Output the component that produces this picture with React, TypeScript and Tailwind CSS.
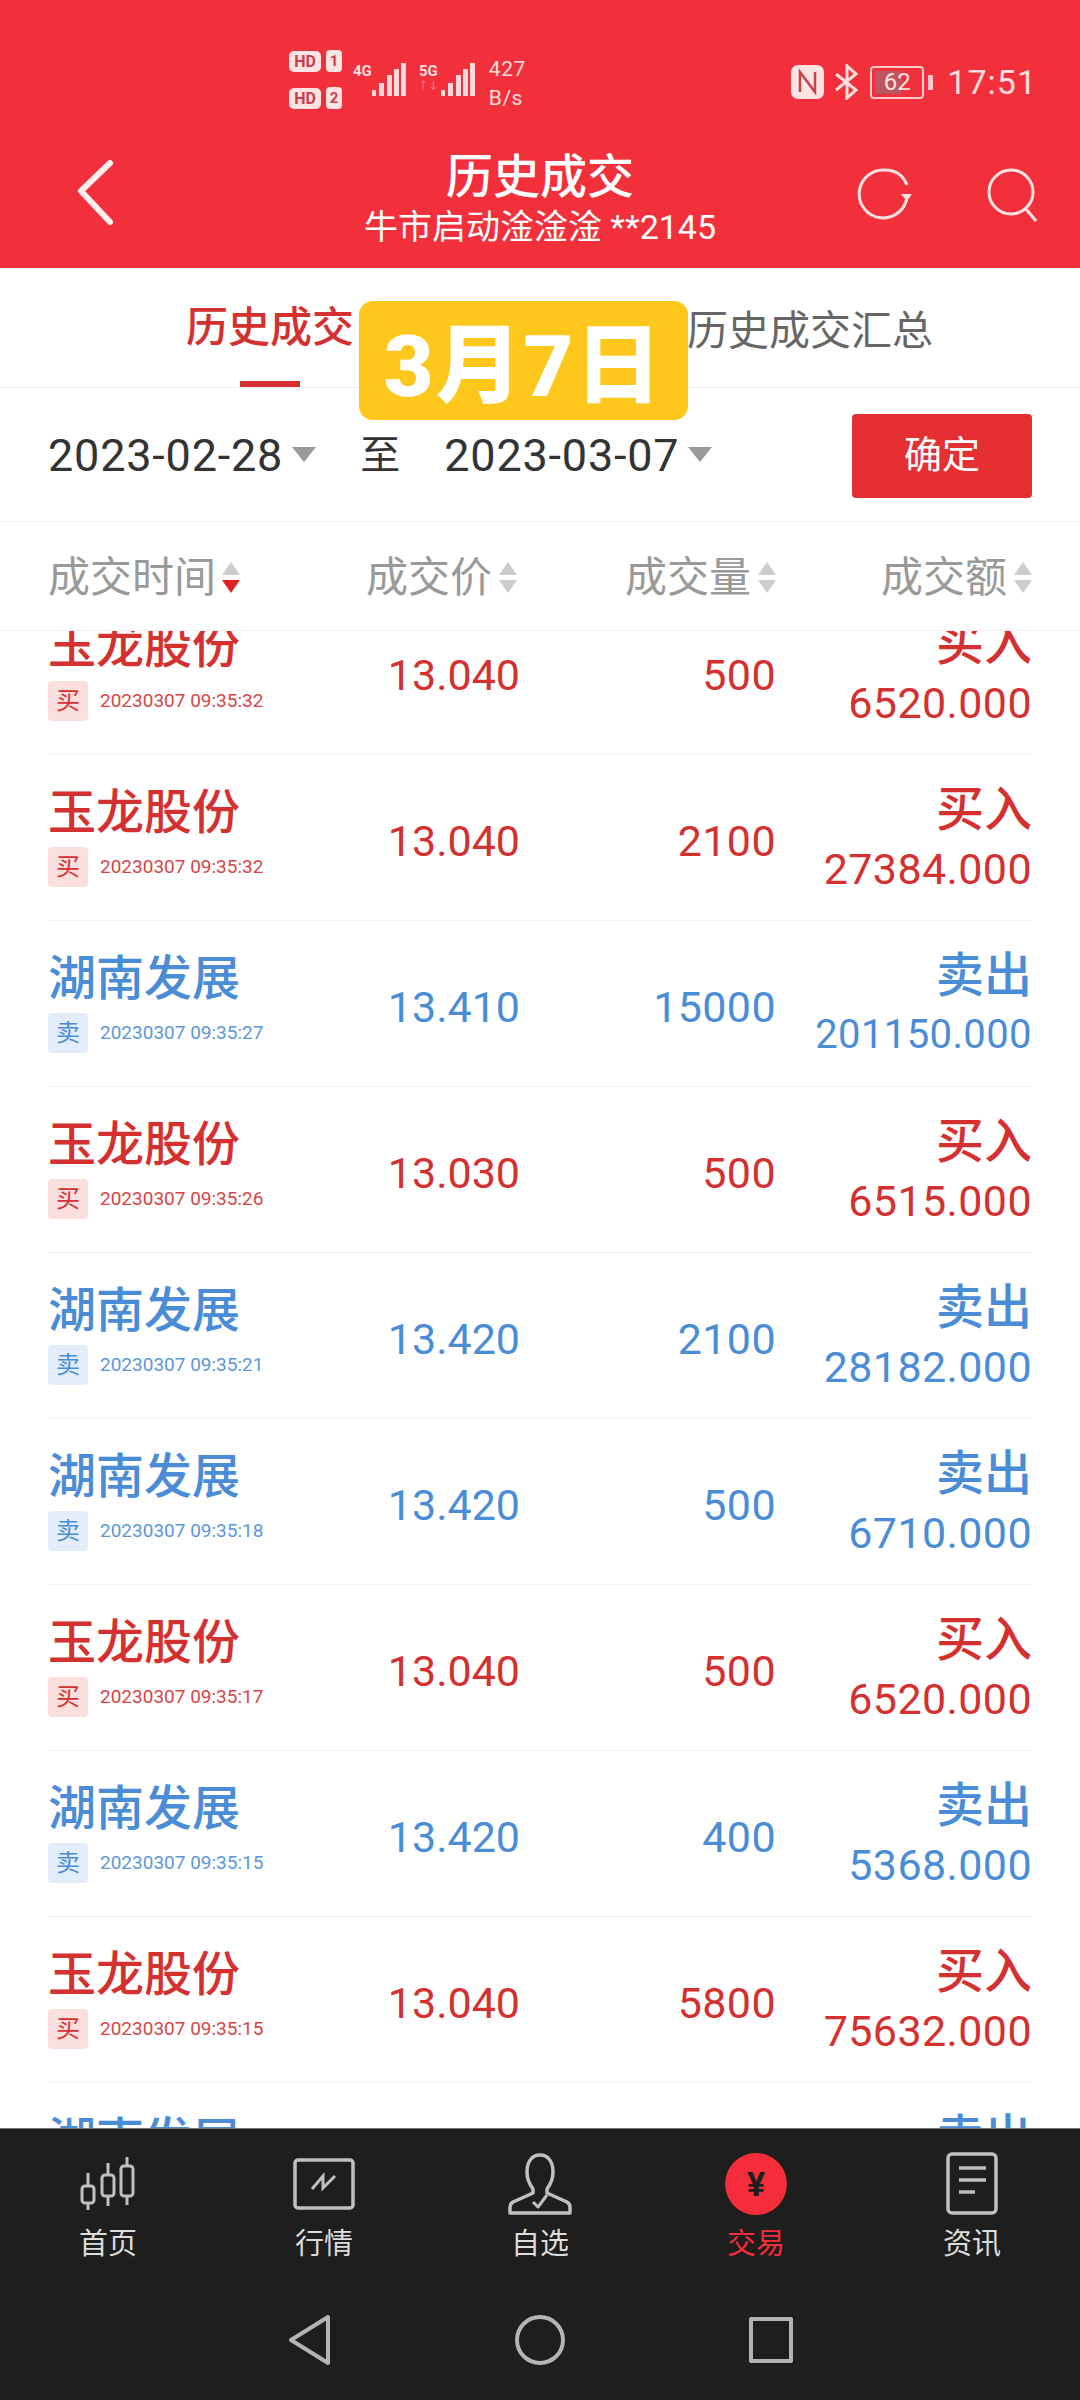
type Trade = { name: string; side: 'buy' | 'sell'; time: string; price: string; qty: string; amount: string };

const trades: Trade[] = [
    { name: '玉龙股份', side: 'buy', time: '20230307 09:35:32', price: '13.040', qty: '500', amount: '6520.000' },
    { name: '玉龙股份', side: 'buy', time: '20230307 09:35:32', price: '13.040', qty: '2100', amount: '27384.000' },
    { name: '湖南发展', side: 'sell', time: '20230307 09:35:27', price: '13.410', qty: '15000', amount: '201150.000' },
    { name: '玉龙股份', side: 'buy', time: '20230307 09:35:26', price: '13.030', qty: '500', amount: '6515.000' },
    { name: '湖南发展', side: 'sell', time: '20230307 09:35:21', price: '13.420', qty: '2100', amount: '28182.000' },
    { name: '湖南发展', side: 'sell', time: '20230307 09:35:18', price: '13.420', qty: '500', amount: '6710.000' },
    { name: '玉龙股份', side: 'buy', time: '20230307 09:35:17', price: '13.040', qty: '500', amount: '6520.000' },
    { name: '湖南发展', side: 'sell', time: '20230307 09:35:15', price: '13.420', qty: '400', amount: '5368.000' },
    { name: '玉龙股份', side: 'buy', time: '20230307 09:35:15', price: '13.040', qty: '5800', amount: '75632.000' },
    { name: '湖南发展', side: 'sell', time: '20230307 09:35:12', price: '13.420', qty: '300', amount: '4026.000' },
];

function Signal() {
    return (
        <svg width="34" height="34" viewBox="0 0 34 34" fill="#ffd9d9">
            <rect x="0" y="27" width="4" height="6" />
            <rect x="7" y="20" width="5" height="13" />
            <rect x="15" y="12" width="5" height="21" />
            <rect x="22" y="6" width="5" height="27" />
            <rect x="29" y="0" width="5" height="33" />
        </svg>
    );
}

function SimTag({ n }: { n: string }) {
    return (
        <div className="flex items-center gap-[5px]">
            <span className="w-[32px] h-[21px] rounded-[5px] bg-[#ffe3e3] text-[#c8404a] text-[16px] font-bold leading-[21px] text-center">HD</span>
            <span className="w-[16px] h-[22px] rounded-[4px] bg-[#ffe3e3] text-[#c8404a] text-[15px] font-bold leading-[22px] text-center">{n}</span>
        </div>
    );
}

function StatusBar() {
    return (
        <div className="h-[108px] pl-[289px] pr-[43px] pt-[50px] flex items-start justify-between text-[#ffdede]">
            <div className="flex items-start">
                <div className="flex flex-col gap-[15px]">
                    <SimTag n="1" />
                    <SimTag n="2" />
                </div>
                <span className="ml-[11px] mt-[12px] text-[15px] font-bold leading-[18px]">4G</span>
                <div className="mt-[13px]"><Signal /></div>
                <div className="ml-[13px] mt-[12px] flex flex-col items-center w-[19px]">
                    <span className="text-[15px] font-bold leading-[18px]">5G</span>
                    <span className="text-[10px] leading-[12px] text-[#f78b8f]">↑↓</span>
                </div>
                <div className="ml-[3px] mt-[13px]"><Signal /></div>
                <div className="ml-[14px] mt-[5px] flex flex-col text-[21px] leading-[29px] tracking-[0.5px]">
                    <span>427</span>
                    <span>B/s</span>
                </div>
            </div>
            <div className="flex items-center mt-[12px]">
                <svg width="33" height="34" viewBox="0 0 33 34">
                    <rect width="33" height="34" rx="7" fill="#ffe3e3" />
                    <path d="M9 27V7L24 27V7" fill="none" stroke="#c8404a" strokeWidth="2.5" />
                </svg>
                <svg className="ml-[10px]" width="26" height="36" viewBox="0 0 26 36" fill="none" stroke="#ffdede" strokeWidth="3">
                    <path d="M2 10L22 26L13 34V2L22 10L2 26" />
                </svg>
                <div className="ml-[10px] w-[54px] h-[33px] rounded-[4px] border-2 border-[#ffc9c9] p-[3px] relative">
                    <div className="h-full w-[60%] bg-[#bd5560]" />
                    <span className="absolute inset-0 text-center text-[24px] leading-[29px] text-[#ffe3e3]">62</span>
                </div>
                <div className="ml-[4px] w-[5px] h-[15px] bg-[#ffc9c9] rounded-[1px]" />
                <span className="ml-[14px] text-[34px] leading-[40px] tracking-[1px]">17:51</span>
            </div>
        </div>
    );
}

function TitleBar() {
    return (
        <div className="h-[160px] grid grid-cols-[1fr_auto_1fr] items-start text-white">
            <div className="pl-[74px] pt-[50px]">
                <svg width="44" height="70" viewBox="0 0 44 70" fill="none" stroke="#ffeeee" strokeWidth="6" strokeLinecap="round" strokeLinejoin="round">
                    <path d="M36 5L7 33L36 64" />
                </svg>
            </div>
            <div className="flex flex-col items-center">
                <span className="text-[47px] leading-[56px] mt-[41px] font-medium">历史成交</span>
                <span className="text-[34px] leading-[40px] mt-[2px] whitespace-nowrap">
                    牛市启动淦淦淦 **2145
                </span>
            </div>
            <div className="flex justify-end items-start pr-[40px] pt-[59px] gap-[73px]">
                <svg width="56" height="54" viewBox="0 0 56 54" fill="none" stroke="#ffe3e3" strokeWidth="3">
                    <path d="M50 30A24 24 0 1 1 28 3C38 3 46 8 50 18" />
                    <path d="M44 27H55L50 34Z" fill="#ffe3e3" stroke="none" />
                </svg>
                <svg width="54" height="56" viewBox="0 0 54 56" fill="none" stroke="#ffe3e3" strokeWidth="3">
                    <circle cx="25" cy="25" r="22" />
                    <path d="M40 42L50 54" />
                </svg>
            </div>
        </div>
    );
}

function Tabs() {
    return (
        <div className="relative h-[120px] border-b border-[#f0f0f0] grid grid-cols-2">
            <div className="flex flex-col items-center">
                <span className="mt-[33px] text-[42px] leading-[54px] text-[#d43030] font-medium">历史成交</span>
                <div className="mt-[26px] w-[60px] h-[6px] bg-[#d43030]" />
            </div>
            <div className="flex justify-center">
                <span className="mt-[36px] text-[41px] leading-[54px] text-[#666]">历史成交汇总</span>
            </div>
            <div className="absolute left-[359px] top-[33px] w-[329px] h-[119px] rounded-[14px] bg-[#fdc71b] text-white font-black text-[86px] leading-[132px] text-center z-10 tracking-[2px] overflow-hidden">
                3月7日
            </div>
        </div>
    );
}

function DateCaret() {
    return <div className="w-0 h-0 border-x-[12px] border-x-transparent border-t-[15px] border-t-[#999]" />;
}

function DateRow() {
    return (
        <div className="h-[134px] pl-[48px] pr-[48px] flex items-center border-b border-[#f0f0f0] text-[#333]">
            <span className="text-[45px] leading-[50px] tracking-[0.8px] mt-[2px]">2023-02-28</span>
            <div className="ml-[9px] mt-[-1px]"><DateCaret /></div>
            <span className="ml-[44px] text-[40px] leading-[50px] mt-[2px]">至</span>
            <span className="ml-[44px] text-[45px] leading-[50px] tracking-[0.8px] mt-[2px]">2023-03-07</span>
            <div className="ml-[9px] mt-[-1px]"><DateCaret /></div>
            <button className="ml-auto w-[180px] h-[84px] rounded-[4px] bg-[#e62f33] text-white text-[38px] mt-[2px]">确定</button>
        </div>
    );
}

function SortIcon({ active }: { active?: boolean }) {
    return (
        <div className="flex flex-col gap-[5px]">
            <div className="w-0 h-0 border-x-[9px] border-x-transparent border-b-[13px] border-b-[#ccc]" />
            <div className={active ? 'w-0 h-0 border-x-[9px] border-x-transparent border-t-[13px] border-t-[#e02020]' : 'w-0 h-0 border-x-[9px] border-x-transparent border-t-[13px] border-t-[#ccc]'} />
        </div>
    );
}

function TableHeader() {
    const cell = 'flex items-center justify-end gap-[7px] whitespace-nowrap';
    return (
        <div className="h-[108px] px-[48px] pt-[3px] grid grid-cols-[344px_128px_256px_256px] items-center text-[42px] leading-[50px] text-[#999]">
            <div className="flex items-center gap-[6px]">成交时间<SortIcon active /></div>
            <div className={cell + ' pr-[3px]'}>成交价<SortIcon /></div>
            <div className={cell}>成交量<SortIcon /></div>
            <div className={cell}>成交额<SortIcon /></div>
        </div>
    );
}

function TradeRow({ trade }: { trade: Trade }) {
    const buy = trade.side === 'buy';
    return (
        <div className={buy
            ? 'h-[166px] border-b border-[#f0f0f0] grid grid-cols-[336px_136px_256px_256px] text-[#d43030]'
            : 'h-[166px] border-b border-[#f0f0f0] grid grid-cols-[336px_136px_256px_256px] text-[#4a8cd6]'}>
            <div className="pt-[32px]">
                <div className="text-[48px] leading-[52px] font-medium">{trade.name}</div>
                <div className="mt-[8px] flex items-center">
                    <span className={buy
                        ? 'w-[40px] h-[40px] rounded-[4px] bg-[#fbdfdf] text-[24px] leading-[40px] text-center'
                        : 'w-[40px] h-[40px] rounded-[4px] bg-[#e3edf9] text-[24px] leading-[40px] text-center'}>
                        {buy ? '买' : '卖'}
                    </span>
                    <span className="ml-[12px] text-[19px] leading-[40px] whitespace-nowrap opacity-90">{trade.time}</span>
                </div>
            </div>
            <div className="pt-[60px] text-[43px] leading-[52px] text-right font-[450] whitespace-nowrap">{trade.price}</div>
            <div className="pt-[60px] text-[43px] leading-[52px] text-right font-[450] tracking-[0.4px]">{trade.qty}</div>
            <div className="pt-[29px] text-right">
                <div className="text-[48px] leading-[52px] font-medium">{buy ? '买入' : '卖出'}</div>
                {/* long amounts are shrunk to fit */}
                <div className={trade.amount.length > 9
                    ? 'mt-[7px] text-[40px] leading-[52px] font-[450] tracking-[0.4px]'
                    : 'mt-[7px] text-[43px] leading-[52px] font-[450] tracking-[0.4px]'}>{trade.amount}</div>
            </div>
        </div>
    );
}

function NavIcon({ index }: { index: number }) {
    if (index === 0) {
        return (
            <svg width="80" height="64" viewBox="0 0 80 64" fill="none" stroke="#c0c0c0" strokeWidth="3">
                <path d="M20 21V34M20 51V58M40 11V23M40 44V54M59 5V14M59 44V53" />
                <rect x="14" y="34" width="12" height="17" rx="3" />
                <rect x="34" y="23" width="12" height="21" rx="3" />
                <rect x="53" y="14" width="12" height="30" rx="3" />
            </svg>
        );
    }
    if (index === 1) {
        return (
            <svg width="80" height="64" viewBox="0 0 80 64" fill="none" stroke="#c0c0c0" strokeWidth="3.5">
                <rect x="11" y="8" width="58" height="48" rx="3" />
                <path d="M28 37L39 24V36L51 24" strokeWidth="3" />
            </svg>
        );
    }
    if (index === 2) {
        return (
            <svg width="80" height="64" viewBox="0 0 80 64" fill="none" stroke="#c0c0c0" strokeWidth="3.5" strokeLinejoin="round">
                <path d="M40 3C31 3 27 11 27 20C27 28 30 33 33 37V41L13 50Q10 52 10 55V61H70V55Q70 52 67 50L47 41V37C50 33 53 28 53 20C53 11 49 3 40 3Z" />
                <path d="M33 50L38 55L47 43" strokeWidth="3" />
            </svg>
        );
    }
    if (index === 3) {
        return (
            <div className="w-[62px] h-[62px] rounded-full bg-[#f52c3a] text-[#1e1e1e] text-[34px] font-bold leading-[62px] text-center">¥</div>
        );
    }
    return (
        <svg width="80" height="64" viewBox="0 0 80 64" fill="none" stroke="#c0c0c0" strokeWidth="3.5">
            <rect x="16" y="2" width="48" height="59" rx="4" />
            <path d="M27 16H54M27 28H54M27 40H43" />
        </svg>
    );
}

const navItems = ['首页', '行情', '自选', '交易', '资讯'];

function BottomNav() {
    return (
        <div className="h-[272px] bg-[#1e1e1e] border-t border-[#777] shrink-0 relative z-10">
            <div className="grid grid-cols-5 pt-[23px]">
                {navItems.map((label, i) => (
                    <div key={label} className="flex flex-col items-center">
                        <div className="h-[64px] flex items-center justify-center"><NavIcon index={i} /></div>
                        <span className={i === 3
                            ? 'mt-[10px] text-[29px] leading-[36px] text-[#f52c3a]'
                            : 'mt-[10px] text-[29px] leading-[36px] text-[#dcdcdc]'}>{label}</span>
                    </div>
                ))}
            </div>
            <div className="mt-[51px] px-[194px] grid grid-cols-3 justify-items-center items-center">
                <svg width="46" height="54" viewBox="0 0 46 54" fill="none" stroke="#b4b4b4" strokeWidth="4" strokeLinejoin="round">
                    <path d="M42 4V50L5 27Z" />
                </svg>
                <svg width="52" height="52" viewBox="0 0 52 52" fill="none" stroke="#b4b4b4" strokeWidth="4">
                    <circle cx="26" cy="26" r="23" />
                </svg>
                <svg width="46" height="48" viewBox="0 0 46 48" fill="none" stroke="#b4b4b4" strokeWidth="4" strokeLinejoin="round">
                    <rect x="3" y="3" width="40" height="42" />
                </svg>
            </div>
        </div>
    );
}

export default function App() {
    return (
        <div className="w-[1080px] h-[2400px] flex flex-col overflow-hidden bg-white" style={{ fontFamily: 'Roboto, "Noto Sans CJK SC", sans-serif' }}>
            <div className="bg-[#f2303c] h-[268px] shrink-0">
                <StatusBar />
                <TitleBar />
            </div>
            <Tabs />
            <DateRow />
            <TableHeader />
            <div className="flex-1 min-h-0 overflow-hidden px-[48px] border-t border-[#f0f0f0]">
                <div className="mt-[-42px]">
                    {trades.map((trade, i) => (
                        <TradeRow key={i} trade={trade} />
                    ))}
                </div>
            </div>
            <BottomNav />
        </div>
    );
}
